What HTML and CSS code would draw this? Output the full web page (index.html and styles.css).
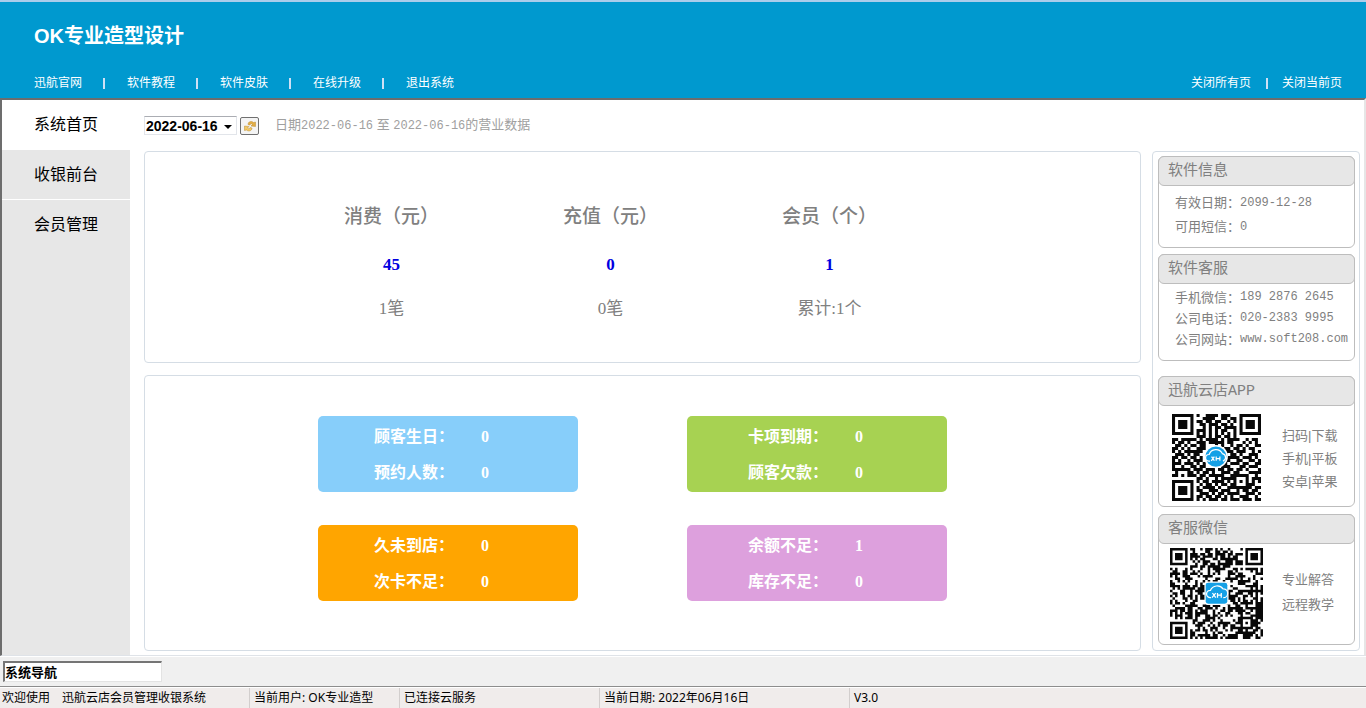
FILE: index.html
```html
<!DOCTYPE html>
<html lang="zh-CN">
<head>
<meta charset="utf-8">
<title>OK专业造型设计</title>
<link rel="stylesheet" href="styles.css">
</head>
<body>
<header class="header">
  <h1 class="brand">OK专业造型设计</h1>
  <nav class="topnav">
    <ul class="links">
      <li><a href="#">迅航官网</a></li>
      <li><a href="#">软件教程</a></li>
      <li><a href="#">软件皮肤</a></li>
      <li><a href="#">在线升级</a></li>
      <li><a href="#">退出系统</a></li>
    </ul>
    <ul class="links links-close">
      <li><a href="#">关闭所有页</a></li>
      <li><a href="#">关闭当前页</a></li>
    </ul>
  </nav>
</header>

<div class="workspace">
  <nav class="sidebar">
    <a class="side-item active" href="#">系统首页</a>
    <a class="side-item" href="#">收银前台</a>
    <a class="side-item" href="#">会员管理</a>
  </nav>

  <main class="page">
    <form class="filter">
      <span class="date-box">
        <select class="date-select" aria-label="日期"><option>2022-06-16</option></select>
        <svg class="date-arrow" width="8" height="4" viewBox="0 0 8 4"><path d="M0 0h8L4 4z"/></svg>
      </span>
      <button class="refresh" type="button" aria-label="刷新">
        <svg width="14" height="14" viewBox="0 0 14 14">
          <path d="M5 5.500C5 2.500 8.500 1.500 10.500 3.500L12.500 3v4.500L8 7l1.500-1.500C8.500 4.300 7.300 4.500 7 6z" fill="#e3ae45" stroke="#b98a30" stroke-width=".5"/>
          <path d="M9 9C9 12 5.500 12.800 3.500 11L1.500 11.500V7L6 7.500 4.500 9C5.500 10.200 6.700 10 7 8.500z" fill="#f3c964" stroke="#b98a30" stroke-width=".5"/>
        </svg>
      </button>
      <p class="range">日期<time>2022-06-16</time> 至 <time>2022-06-16</time>的营业数据</p>
    </form>

    <div class="columns">
      <div class="primary">
        <section class="panel stats">
          <div class="stat"><h2>消费（元）</h2><strong>45</strong><p>1笔</p></div>
          <div class="stat"><h2>充值（元）</h2><strong>0</strong><p>0笔</p></div>
          <div class="stat"><h2>会员（个）</h2><strong>1</strong><p>累计:1个</p></div>
        </section>
        <section class="panel tiles">
          <dl class="tile blue">
            <div><dt>顾客生日：</dt><dd>0</dd></div>
            <div><dt>预约人数：</dt><dd>0</dd></div>
          </dl>
          <dl class="tile green">
            <div><dt>卡项到期：</dt><dd>0</dd></div>
            <div><dt>顾客欠款：</dt><dd>0</dd></div>
          </dl>
          <dl class="tile orange">
            <div><dt>久未到店：</dt><dd>0</dd></div>
            <div><dt>次卡不足：</dt><dd>0</dd></div>
          </dl>
          <dl class="tile violet">
            <div><dt>余额不足：</dt><dd>1</dd></div>
            <div><dt>库存不足：</dt><dd>0</dd></div>
          </dl>
        </section>
      </div>

      <aside class="panel info">
        <section class="card info-soft">
          <h3>软件信息</h3>
          <dl class="facts">
            <div><dt>有效日期：</dt><dd>2099-12-28</dd></div>
            <div><dt>可用短信：</dt><dd>0</dd></div>
          </dl>
        </section>
        <section class="card info-service">
          <h3>软件客服</h3>
          <dl class="facts tight">
            <div><dt>手机微信：</dt><dd>189 2876 2645</dd></div>
            <div><dt>公司电话：</dt><dd>020-2383 9995</dd></div>
            <div><dt>公司网站：</dt><dd>www.soft208.com</dd></div>
          </dl>
        </section>
        <section class="card info-app">
          <h3>迅航云店APP</h3>
          <div class="scan">
            <svg class="qr" id="qr-app" viewBox="0 0 29 29" preserveAspectRatio="none" role="img" aria-label="迅航云店APP二维码">
              <path class="modules"/>
              <circle cx="14.300" cy="14.200" r="3.900" fill="#fff"/>
              <circle cx="14.300" cy="14.200" r="3.400" fill="#14a0e6"/>
              <path d="M12.400 15.700h-.4a1.100 1.100 0 0 1 .1-2.200 2.300 2.300 0 0 1 4.300-.3 1.300 1.300 0 0 1 .2 2.500M12.900 14.200l.9 1.400M13.800 14.200l-1 1.400M14.400 14.200v1.400M14.400 14.900h1.200M15.600 14.200v1.400" fill="none" stroke="#fff" stroke-width=".4"/>
            </svg>
            <ul class="notes"><li>扫码|下载</li><li>手机|平板</li><li>安卓|苹果</li></ul>
          </div>
        </section>
        <section class="card info-wechat">
          <h3>客服微信</h3>
          <div class="scan">
            <svg class="qr qr-large" id="qr-wechat" viewBox="0 0 37 37" preserveAspectRatio="none" role="img" aria-label="客服微信二维码">
              <path class="modules"/>
              <rect x="13.700" y="13.600" width="9.600" height="9.600" rx="1.200" fill="#fff"/>
              <rect x="14.200" y="14.100" width="8.600" height="8.600" rx="1" fill="#14a0e6"/>
              <path d="M16.300 20.200h-.3a1.500 1.500 0 0 1 .1-3 2.900 2.900 0 0 1 5-.6 1.800 1.800 0 0 1 .1 3.600M16.900 18.300l1.300 1.900M18.200 18.300l-1.500 1.900M18.900 18.300v1.900M18.900 19.200h1.500M20.400 18.300v1.900" fill="none" stroke="#fff" stroke-width=".5"/>
            </svg>
            <ul class="notes loose"><li>专业解答</li><li>远程教学</li></ul>
          </div>
        </section>
      </aside>
    </div>
  </main>
</div>

<div class="navstrip"><input class="navbox" type="text" value="系统导航" aria-label="系统导航"></div>

<footer class="status">
  <span class="cell welcome"><span>欢迎使用</span><span>迅航云店会员管理收银系统</span></span>
  <span class="cell user">当前用户: OK专业造型</span>
  <span class="cell service">已连接云服务</span>
  <span class="cell today">当前日期: 2022年06月16日</span>
  <span class="cell">V3.0</span>
</footer>
<script src="qr.js"></script>
</body>
</html>
```

FILE: styles.css
```css
* { box-sizing: border-box; margin: 0; padding: 0; }

body {
  display: flex;
  flex-direction: column;
  min-height: 100vh;
  font-family: "Liberation Sans", "Noto Sans CJK SC", sans-serif;
  font-size: 12px;
  background: #fff;
  color: #000;
}

ul { list-style: none; }
a { color: inherit; text-decoration: none; }

/* Header */
.header {
  border-top: 2px solid #aacdeb;
  background: #0099cf;
  color: #fff;
  padding: 17px 24px 3px 34px;
}
.brand { font-size: 20px; line-height: 34px; font-weight: 700; }
.topnav { display: flex; justify-content: space-between; padding-top: 18px; }
.links { display: flex; line-height: 24px; }
.links li { display: flex; align-items: center; }
.links li + li::before {
  content: "";
  width: 2px;
  height: 11px;
  margin: 0 22px 0 21px;
  background: #cfe0f5;
}
.links-close li + li::before { margin: 0 14px 0 15px; }

/* Workspace */
.workspace {
  flex: 1;
  display: flex;
  border: 2px solid #6d6d6d;
  border-right-color: #e6e6e6;
  border-bottom: 1px solid #dfe3e8;
}
.sidebar { width: 128px; background: #e7e7e7; }
.side-item {
  display: block;
  padding-left: 32px;
  font-size: 16px;
  line-height: 49px;
  border-bottom: 1px solid #fff;
}
.side-item:last-child { border-bottom: 0; }
.side-item.active { background: #fff; }

.page { flex: 1; display: flex; flex-direction: column; padding: 0 4px 4px 14px; }
.filter { display: flex; align-items: center; height: 51px; }
.date-box { display: flex; align-items: center; position: relative; }
.date-select {
  appearance: none;
  width: 93px;
  height: 19px;
  padding: 0 1px;
  border: 1px solid #e2e5ea;
  border-top-color: #abadb3;
  border-radius: 0;
  background: #fff;
  color: #000;
  font: 700 14px "Liberation Sans", sans-serif;
}
.date-arrow { position: absolute; right: 5px; top: 9px; }
.refresh {
  display: flex;
  align-items: center;
  justify-content: center;
  width: 19px;
  height: 18px;
  margin-left: 3px;
  border: 1px solid #707070;
  border-radius: 2px;
  background: #f4f4f4;
}
.range { margin-left: 16px; font-size: 13px; line-height: 20px; color: #a0a0a0; }
.range time { font-family: "Liberation Mono", monospace; font-size: 12px; }

/* Panels */
.columns { flex: 1; display: flex; gap: 11px; }
.primary { flex: 1; display: flex; flex-direction: column; gap: 12px; }
.panel { border: 1px solid #d5dde5; border-radius: 4px; background: #fff; }

.stats { display: flex; padding: 49px 137px 37px; }
.stat { width: 219px; text-align: center; color: #808080; }
.stat h2 { font-size: 19px; line-height: 32px; font-weight: 500; }
.stat strong {
  display: block;
  margin-top: 18px;
  font: 700 17px/28px "Liberation Serif", serif;
  color: #0000e0;
}
.stat p {
  margin-top: 14px;
  font: 17px/32px "Liberation Serif", "Noto Sans CJK SC", serif;
}

.tiles {
  flex: 1;
  display: grid;
  grid-template-columns: 260px 260px;
  align-content: start;
  gap: 33px 109px;
  padding: 40px 173px;
}
.tile {
  padding: 3px 0 1px 56px;
  border-radius: 5px;
  color: #fff;
  font-size: 16px;
  font-weight: 700;
  line-height: 36px;
}
.tile div { display: flex; }
.tile dt { width: 107px; }
.tile dd { font-family: "Liberation Serif", serif; }
.blue { background: #87cefa; }
.green { padding-left: 61px; background: #a7d252; }
.orange { background: #ffa500; }
.violet { padding-left: 61px; background: #dda0dd; }

/* Info column */
.info {
  display: flex;
  flex-direction: column;
  gap: 6px;
  width: 208px;
  padding: 4px 4px 5px 5px;
  color: #808080;
}
.card { border: 1px solid #bdbdbd; border-radius: 6px; }
.card h3 {
  margin: -1px;
  padding: 1px 0 0 9px;
  border: 1px solid #bdbdbd;
  border-radius: 6px;
  background: #e7e7e7;
  font: 400 15px/27px "Liberation Mono", "Noto Sans CJK SC", monospace;
}
.info-soft { height: 92px; }
.info-service { height: 107px; }
.info-app { height: 131px; margin-top: 9px; }
.info-wechat { height: 131px; margin-top: 1px; }
.facts { padding: 6px 0 0 16px; font-size: 13px; line-height: 24px; }
.facts.tight { padding-top: 4px; line-height: 21px; }
.facts div { display: flex; }
.facts dd { font-family: "Liberation Mono", monospace; font-size: 12px; white-space: nowrap; }
.scan { display: flex; align-items: center; padding: 5px 0 0 11px; }
.qr { width: 93px; height: 91px; padding: 2px; margin-top: 2px; }
.qr-large { padding: 0; margin-top: 0; }
.notes { margin-left: 19px; padding-top: 3px; font-size: 13px; line-height: 23px; }
.notes.loose { padding: 0 0 4px; line-height: 25px; }
.modules { fill: #080808; }

/* Bottom bars */
.navstrip {
  padding: 4px 3px;
  border-top: 1px solid #fff;
  border-bottom: 1px solid #8d8d8d;
  background: #f0f0f0;
}
.navbox {
  display: block;
  width: 159px;
  height: 21px;
  padding: 0 0 2px;
  border: 1px solid #e3e3e3;
  border-top: 2px solid #757575;
  border-left: 2px solid #757575;
  background: #fff;
  color: #000;
  font: 700 13px "Noto Sans CJK SC", sans-serif;
}
.status {
  display: flex;
  border-top: 1px solid #fff;
  background: #f0eceb;
  font: 12px/20px "Noto Sans", "Noto Sans CJK SC", sans-serif;
}
.cell { padding-left: 4px; white-space: nowrap; }
.cell + .cell { border-left: 1px solid #d2cecd; }
.welcome { display: flex; gap: 12px; width: 249px; padding-left: 2px; }
.user { width: 150px; }
.service { width: 200px; }
.today { width: 250px; }
```

FILE: qr.js
```js
const appRows = [
  "11111110100111101110001111111",
  "10000010001111001101101000001",
  "10111010110110110010101011101",
  "10111010011011101101001011101",
  "10111010001010110111101011101",
  "10000010111010101100101000001",
  "11111110101010101010101111111",
  "00000000111010110110100000000",
  "11011111010111101011110010110",
  "10110100111011111011000101010",
  "01101011011000101001011010011",
  "11010100111000000110110101100",
  "10101111110000000111011100101",
  "01110101100000000101101001110",
  "11011011010000000011110111010",
  "10100101110000000110011001101",
  "11101110101000000101110110011",
  "10010011011000001110001101110",
  "11111101110111011011011010001",
  "01000110101101001110110001111",
  "11010111011011111001111110010",
  "00000000110100101111100010111",
  "11111110101101111010101010101",
  "10000010010110101101100011100",
  "10111010101111010011111111011",
  "10111010110011101110010110110",
  "10111010011101011011110011101",
  "10000010110110110101001110010",
  "11111110101011101101110111011"
];

function ring(cx, cy, x, y, radius) {
  const d = Math.max(Math.abs(x - cx), Math.abs(y - cy));
  return d <= radius ? d : -1;
}

function scatter(size) {
  let state = 20817;
  const rows = [];
  for (let y = 0; y < size; y++) {
    let row = "";
    for (let x = 0; x < size; x++) {
      state = (state * 1103515245 + 12345) % 2147483648;
      let on = state / 2147483648 < 0.54;
      for (const [cx, cy] of [[3, 3], [size - 4, 3], [3, size - 4]]) {
        const d = ring(cx, cy, x, y, 4);
        if (d >= 0) on = d !== 2 && d !== 4;
      }
      const a = ring(size - 7, size - 7, x, y, 2);
      if (a >= 0) on = a !== 1;
      row += on ? "1" : "0";
    }
    rows.push(row);
  }
  return rows;
}

function draw(id, rows) {
  let d = "";
  rows.forEach((row, y) => {
    for (const run of row.matchAll(/1+/g)) {
      d += `M${run.index} ${y}h${run[0].length}v1h-${run[0].length}z`;
    }
  });
  document.querySelector(`#${id} .modules`).setAttribute("d", d);
}

draw("qr-app", appRows);
draw("qr-wechat", scatter(37));
```
